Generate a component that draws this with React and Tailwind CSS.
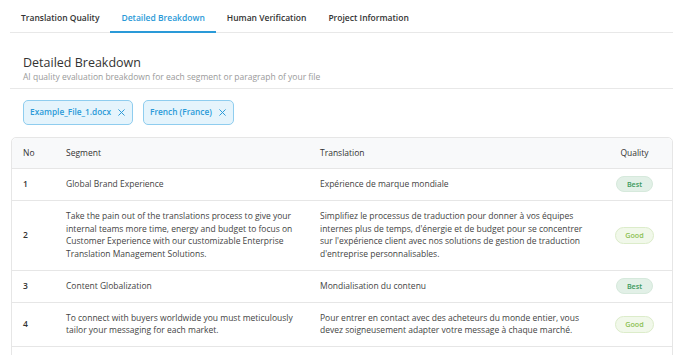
import React from "react";

const rows = [
  {
    no: "1",
    seg: ["Global Brand Experience"],
    tr: ["Expérience de marque mondiale"],
    q: "Best",
  },
  {
    no: "2",
    seg: [
      "Take the pain out of the translations process to give your",
      "internal teams more time, energy and budget to focus on",
      "Customer Experience with our customizable Enterprise",
      "Translation Management Solutions.",
    ],
    tr: [
      "Simplifiez le processus de traduction pour donner à vos équipes",
      "internes plus de temps, d'énergie et de budget pour se concentrer",
      "sur l'expérience client avec nos solutions de gestion de traduction",
      "d'entreprise personnalisables.",
    ],
    q: "Good",
  },
  {
    no: "3",
    seg: ["Content Globalization"],
    tr: ["Mondialisation du contenu"],
    q: "Best",
  },
  {
    no: "4",
    seg: [
      "To connect with buyers worldwide you must meticulously",
      "tailor your messaging for each market.",
    ],
    tr: [
      "Pour entrer en contact avec des acheteurs du monde entier, vous",
      "devez soigneusement adapter votre message à chaque marché.",
    ],
    q: "Good",
  },
];

function XIcon() {
  return (
    <svg width="7" height="7" viewBox="0 0 10 10" className="shrink-0">
      <path d="M1 1 L9 9 M9 1 L1 9" stroke="#2a9ad8" strokeWidth="1.4" strokeLinecap="round" />
    </svg>
  );
}

function Chip({ label }) {
  return (
    <div className="flex items-center gap-[7px] h-[25px] pl-[6px] pr-[7px] rounded-[5px] border border-[#8fcdef] bg-[#e5f4fc] text-[#2a9ad8] text-[8.3px] font-semibold">
      <span>{label}</span>
      <XIcon />
    </div>
  );
}

function Badge({ q }) {
  if (q === "Best") {
    return (
      <div className="w-[37px] h-[16px] rounded-full bg-[#e2f0e7] border border-[#d6e9dc] text-[#3b9a5c] text-[7.2px] font-semibold flex items-center justify-center">
        Best
      </div>
    );
  }
  return (
    <div className="w-[39px] h-[17px] rounded-full bg-[#f1f8ea] border border-[#dcecca] text-[#8cc152] text-[7.2px] font-semibold flex items-center justify-center">
      Good
    </div>
  );
}

export default function App() {
  const tabs = ["Translation Quality", "Detailed Breakdown", "Human Verification", "Project Information"];
  return (
    <div className="w-[688px] h-[355px] overflow-hidden bg-white" style={{ fontFamily: '"Open Sans", sans-serif' }}>
      <div className="ml-[10px] w-[663px]">
        {/* Tabs */}
        <div className="flex border-b border-[#e8e8e8] h-[33px]">
          {tabs.map((t, i) => (
            <div
              key={t}
              className={
                i === 1
                  ? "px-[11px] h-[33px] pt-[11px] leading-[14px] text-[8.5px] font-semibold text-[#2a9ad8] border-b-2 border-[#2a9ad8] -mb-px"
                  : "px-[11px] h-[33px] pt-[11px] leading-[14px] text-[8.5px] font-semibold text-[#333333]"
              }
            >
              {t}
            </div>
          ))}
        </div>

        {/* Heading */}
        <div className="pl-[13px] pt-[22px] pb-[6px] border-b border-[#e8e8e8]">
          <div className="text-[12.5px] leading-[16px] text-[#333333]">Detailed Breakdown</div>
          <div className="text-[8.5px] leading-[11px] text-[#9a9a9a]">
            AI quality evaluation breakdown for each segment or paragraph of your file
          </div>
        </div>

        {/* Chips */}
        <div className="flex gap-[10px] pl-[13px] pt-[11px]">
          <Chip label="Example_File_1.docx" />
          <Chip label="French (France)" />
        </div>

        {/* Table */}
        <div className="mt-[12px] ml-px border border-[#e6e6e6] rounded-t-[5px] text-[8.5px]">
          <div className="grid grid-cols-[43px_254px_288px_1fr] h-[31px] items-center bg-[#f8f9fa] rounded-t-[5px] text-[#333333] border-b border-[#e6e6e6]">
            <div className="px-[11px]">No</div>
            <div className="px-[11px]">Segment</div>
            <div className="px-[11px]">Translation</div>
            <div className="text-center">Quality</div>
          </div>
          {rows.map((r) => (
            <div
              key={r.no}
              className="grid grid-cols-[43px_254px_288px_1fr] items-center py-[9px] border-b border-[#e6e6e6] leading-[12.75px] text-[#444444]"
            >
              <div className="px-[11px] font-semibold text-[#333333]">{r.no}</div>
              <div className="px-[11px]">
                {r.seg.map((l) => (
                  <div key={l} className="whitespace-nowrap">{l}</div>
                ))}
              </div>
              <div className="px-[11px]">
                {r.tr.map((l) => (
                  <div key={l} className="whitespace-nowrap">{l}</div>
                ))}
              </div>
              <div className="flex justify-center -my-[3px]">
                <Badge q={r.q} />
              </div>
            </div>
          ))}
          <div className="h-[20px]" />
        </div>
      </div>
    </div>
  );
}
